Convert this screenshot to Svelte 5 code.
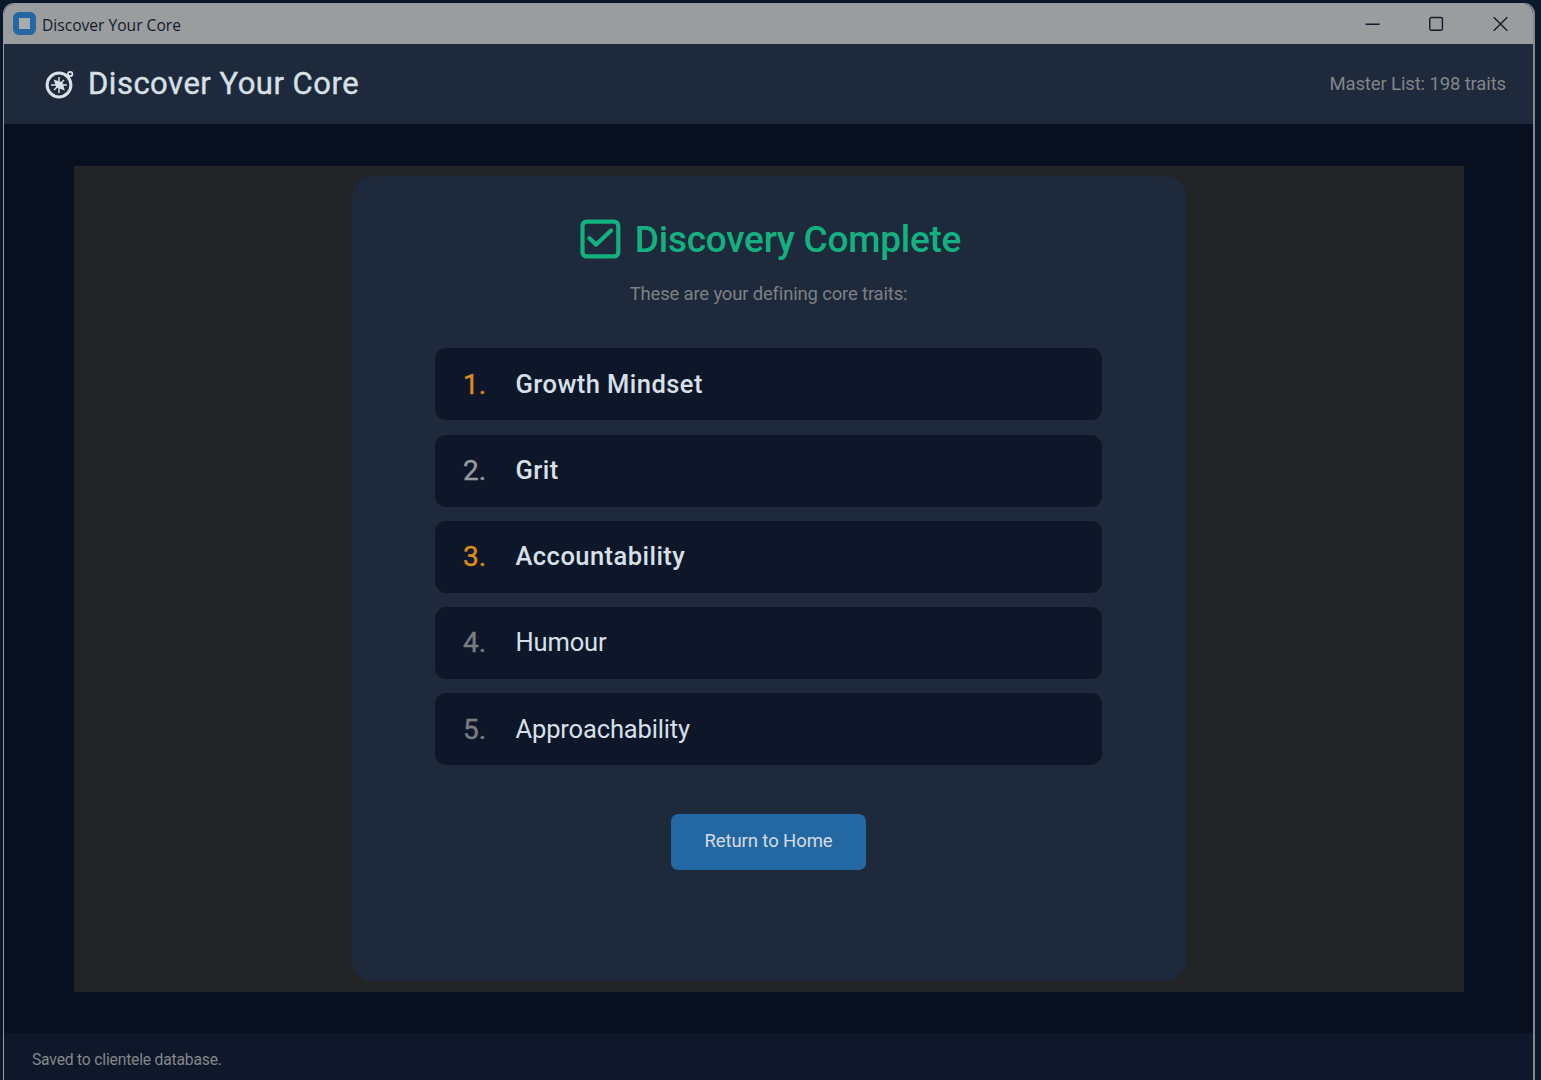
<script>
    const appName = 'Discover Your Core'
    const traitCount = 198

    const traits = [
        { rank: 1, name: 'Growth Mindset', medal: 'gold' },
        { rank: 2, name: 'Grit', medal: 'silver' },
        { rank: 3, name: 'Accountability', medal: 'bronze' },
        { rank: 4, name: 'Humour' },
        { rank: 5, name: 'Approachability' }
    ]
</script>

<div class="desktop">
    <div class="window">
        <div class="titlebar">
            <span class="appIcon"></span>
            <span class="caption">{appName}</span>
            <div class="controls">
                <svg width="16" height="16" viewBox="0 0 16 16"><path d="M1.6 8.2H15.6" /></svg>
                <svg width="16" height="16" viewBox="0 0 16 16"><rect x="1.8" y="1.5" width="12.6" height="12.8" rx="1.6" /></svg>
                <svg width="16" height="16" viewBox="0 0 16 16"><path d="M1.7 1.2L15.3 14.8M15.3 1.2L1.7 14.8" /></svg>
            </div>
        </div>

        <header>
            <svg class="compass" width="30" height="30" viewBox="0 0 30 30">
                <circle cx="14" cy="16" r="11.9" fill="none" stroke="currentColor" stroke-width="3" />
                <circle cx="25.2" cy="5" r="2.2" fill="none" stroke="currentColor" stroke-width="1.8" />
                <path d="M14 8V24M6 16H22M19 11L9 21" stroke="currentColor" stroke-width="1.5" />
                <path d="M8.6 10.6L17.6 13.6L19.8 21.6L11.4 18.4Z" fill="currentColor" />
            </svg>
            <h1>{appName}</h1>
            <span class="count">Master List: {traitCount} traits</span>
        </header>

        <main>
            <div class="scrollArea">
                <section class="card">
                    <div class="heading">
                        <svg width="42" height="42" viewBox="0 0 42 42" fill="none" stroke="currentColor" stroke-width="4.2">
                            <rect x="3.5" y="3.6" width="35.8" height="34.8" rx="4.2" />
                            <path d="M10.4 20.2L17.2 26.6L32 12.4" stroke-linecap="round" stroke-linejoin="round" />
                        </svg>
                        <h2>Discovery Complete</h2>
                    </div>
                    <p>These are your defining core traits:</p>
                    <ol>
                        {#each traits as trait (trait.rank)}
                            <li class:top={trait.medal}>
                                <span class="rank {trait.medal ?? ''}">{trait.rank}.</span>
                                <span class="name">{trait.name}</span>
                            </li>
                        {/each}
                    </ol>
                    <button>Return to Home</button>
                </section>
            </div>
        </main>

        <footer>Saved to clientele database.</footer>
    </div>
</div>

<style>
    :global(body) {
        margin: 0;
        background: #0b172b;
    }

    .desktop {
        box-sizing: border-box;
        width: 1541px;
        height: 1080px;
        padding: 3px 6px 0 3px;
        background: #0c182c;
        font-family: Roboto, sans-serif;
        color: #d7e0e8;
        overflow: hidden;
    }

    .window {
        box-sizing: border-box;
        height: 1077px;
        display: flex;
        flex-direction: column;
        border: 1px solid #8f999f;
        border-right: 2px solid #85888b;
        border-bottom: 0;
        border-radius: 11px 11px 0 0;
        background: #080f1e;
        overflow: hidden;
    }

    .titlebar {
        height: 40px;
        flex: none;
        display: flex;
        align-items: center;
        padding: 0 25px 1px 9px;
        box-sizing: border-box;
        background: #9b9c9d;
        color: #101b2e;
    }

    .appIcon {
        box-sizing: border-box;
        width: 23px;
        height: 23px;
        border: 6px solid #2368a2;
        border-radius: 6px;
        background: #aaabac;
    }

    .caption {
        margin: 2px 0 0 6px;
        font-family: "Open Sans", "Noto Sans", sans-serif;
        font-size: 15.6px;
    }

    .controls {
        display: flex;
        gap: 48px;
        margin-left: auto;
    }

    .controls svg {
        fill: none;
        stroke: #101b2e;
        stroke-width: 1.4;
    }

    header {
        height: 80px;
        flex: none;
        display: flex;
        align-items: center;
        padding: 0 27px 0 41px;
        background: #1e293b;
    }

    h1 {
        margin: 0 0 1px 13px;
        font-size: 31px;
        font-weight: 400;
        letter-spacing: 0.5px;
        -webkit-text-stroke: 0.4px currentColor;
    }

    .count {
        margin-left: auto;
        font-size: 18.5px;
        letter-spacing: -0.13px;
        color: #838587;
    }

    main {
        height: 909px;
        flex: none;
        box-sizing: border-box;
        padding: 42px 69px 41px 70px;
    }

    .scrollArea {
        height: 826px;
        display: flex;
        justify-content: center;
        background: #232425;
    }

    .card {
        box-sizing: border-box;
        width: 834px;
        height: 805px;
        margin-top: 10px;
        padding: 42px 1px 0 0;
        display: flex;
        flex-direction: column;
        align-items: center;
        border-radius: 21px;
        background: #1e293b;
    }

    .heading {
        height: 42px;
        display: flex;
        align-items: center;
        gap: 14px;
        margin-left: 3px;
        color: #12b17f;
    }

    h2 {
        margin: 0;
        font-size: 37px;
        font-weight: 500;
        letter-spacing: -0.25px;
    }

    p {
        margin: 23px 0 0;
        font-size: 18.5px;
        line-height: 22px;
        letter-spacing: -0.18px;
        color: #7e8083;
    }

    ol {
        width: 667px;
        margin: 43.4px 0 0;
        padding: 0;
        display: flex;
        flex-direction: column;
        gap: 14.2px;
        list-style: none;
    }

    li {
        box-sizing: border-box;
        height: 72px;
        display: flex;
        align-items: center;
        padding: 0 0 1px 28px;
        border-radius: 11px;
        background: #0e1729;
    }

    .rank {
        width: 52.5px;
        padding-top: 1px;
        font-size: 28px;
        color: #7a7d80;
        -webkit-text-stroke: 0.4px currentColor;
    }

    .gold,
    .bronze {
        color: #d98c17;
    }

    .silver {
        color: #999b9e;
    }

    .name {
        font-size: 25.5px;
        letter-spacing: -0.15px;
    }

    .top .name {
        font-weight: 500;
        letter-spacing: 0.45px;
    }

    button {
        width: 195px;
        height: 56px;
        margin-top: 48.8px;
        padding: 0 0 2px;
        border: 0;
        border-radius: 7px;
        background: #2368a2;
        color: #d7dce2;
        font-family: inherit;
        font-size: 18.5px;
        letter-spacing: -0.1px;
    }

    footer {
        flex: 1;
        display: flex;
        align-items: center;
        padding: 5px 0 0 28px;
        background: #0f172a;
        color: #85878a;
        font-size: 15.7px;
        letter-spacing: -0.2px;
    }
</style>
